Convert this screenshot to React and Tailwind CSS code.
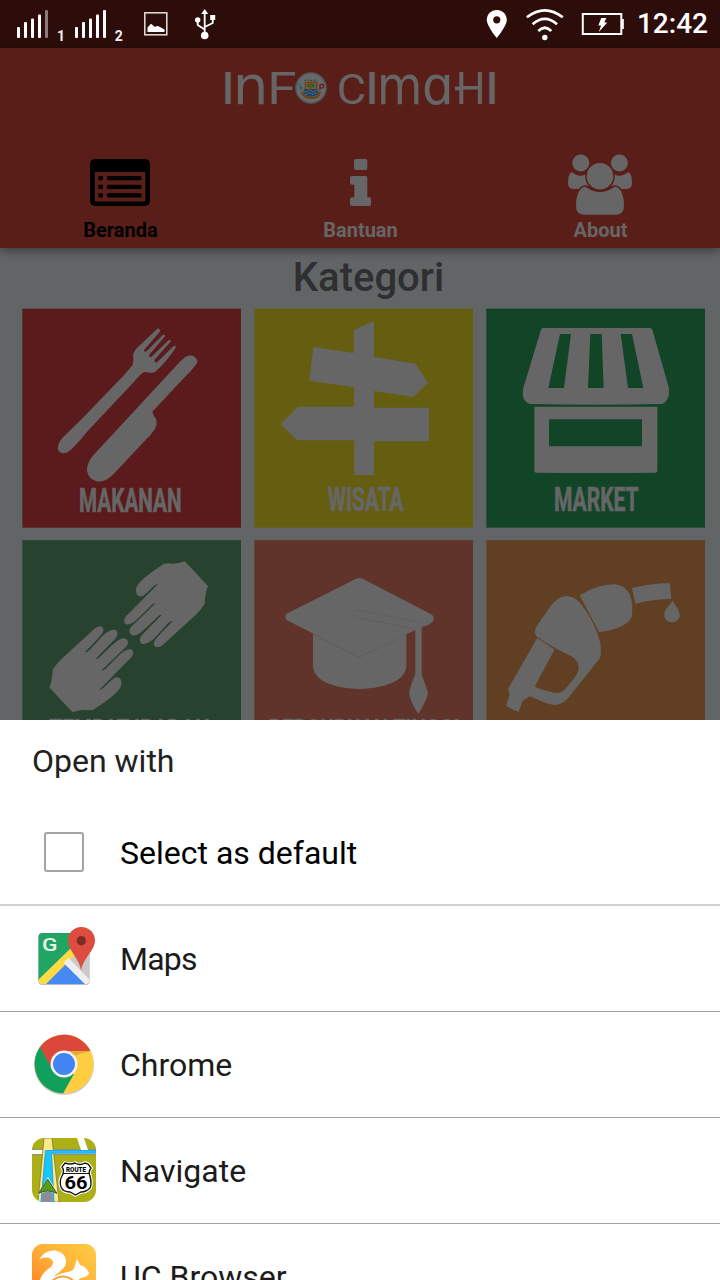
import React from "react";

const G = "#666666";

function SignalBars({ x, full }) {
  const tops = [27, 22, 18.5, 14.5, 10];
  return (
    <g fill="#fff">
      {tops.map((t, i) => (
        <rect key={t} x={x + i * 7} y={t} width="3" height={38 - t} rx="1" opacity={i === 4 && !full ? 0.45 : 1} />
      ))}
    </g>
  );
}

function StatusBar() {
  return (
    <div className="flex h-12 shrink-0 items-center justify-between bg-[#2d0d09] pr-3">
      <svg width="240" height="48" viewBox="0 0 240 48">
        <SignalBars x={17} />
        <SignalBars x={75} full />
        <text x="57" y="40.5" fontSize="14" fontWeight="700" fill="#eee" fontFamily="Roboto, sans-serif">1</text>
        <text x="114.8" y="40.5" fontSize="14" fontWeight="700" fill="#eee" fontFamily="Roboto, sans-serif">2</text>
        <rect x="144.8" y="12.8" width="22" height="22" fill="none" stroke="#dcd2d1" strokeWidth="1.6" />
        <path d="M147.500 32v-4.500l3.500-3.800 4 3.300q2-1.500 4-.500l5.500 3v2.500z" fill="#fff" />
        <g fill="none" stroke="#fff" strokeWidth="1.8">
          <path d="M204.7 35V13M204.7 29.500l-7-4.500v-4M204.700 27l8-4v-5" />
        </g>
        <g fill="#fff">
          <circle cx="204.700" cy="35.500" r="3.800" />
          <path d="M201.200 14l3.500-5 3.500 5z" />
          <circle cx="197.700" cy="20" r="2.700" />
          <rect x="210.200" y="15" width="5" height="5" />
        </g>
      </svg>
      <div className="flex items-center">
        <svg width="154" height="48" viewBox="483.2 0 154 48">
          <path fillRule="evenodd" fill="#fff" d="M497 10c-5.700 0-10 4.300-10 9.800 0 6.500 10 18.200 10 18.200s10-11.700 10-18.200c0-5.500-4.300-9.800-10-9.800zm0 6.200a3.600 3.600 0 1 1 0 7.200 3.600 3.600 0 0 1 0-7.200z" />
          <g fill="none" stroke="#fff" strokeWidth="2.600">
            <path d="M527 17.300Q545 3.500 563 17.300" />
            <path d="M532.800 24.300Q545 13.500 557.200 24.300" />
            <path d="M538.500 31Q545 24.500 551.500 31" />
          </g>
          <circle cx="545" cy="37.500" r="2.700" fill="#fff" />
          <rect x="583" y="14" width="38.500" height="20" fill="none" stroke="#fff" strokeWidth="2" />
          <rect x="621.500" y="19" width="2.500" height="10" fill="#fff" />
          <path d="M601.500 18h5l-2 4.500h3l-8.500 9.500 2.300-6.500H598.500z" fill="#fff" />
        </svg>
        <span className="text-[28px] leading-[50px] font-medium text-white">12:42</span>
      </div>
    </div>
  );
}

const sans = "Roboto, sans-serif";
const round = "'DejaVu Sans', sans-serif";

const wordmark = [
  { c: "I", x: 36, l: 36, s: 131, w: 500, f: sans },
  { c: "n", x: 68, l: 107, s: 160, w: 400, f: round },
  { c: "F", x: 172, l: 88, s: 131, w: 400, f: sans },
  { c: "C", x: 380, l: 88, s: 128, w: 400, f: sans },
  { c: "I", x: 468, l: 36, s: 131, w: 500, f: sans },
  { c: "m", x: 501, l: 136, s: 160, w: 400, f: round },
  { c: "ɑ", x: 636, l: 95, s: 160, w: 400, f: round },
  { c: "H", x: 738, l: 88, s: 131, w: 400, f: sans },
  { c: "I", x: 828, l: 36, s: 131, w: 500, f: sans },
];

function Wordmark() {
  return (
    <svg className="mx-auto mt-[7px] block overflow-visible" width="300" height="65" viewBox="0 0 900 195" aria-label="INFO CIMAHI">
      <g fill={G}>
        {wordmark.map((g, i) => (
          <text key={i} x={g.x} y="147" fontFamily={g.f} fontSize={g.s} fontWeight={g.w} textLength={g.l} lengthAdjust="spacingAndGlyphs">{g.c}</text>
        ))}
      </g>
      <rect x="735" y="95" width="16" height="11" fill={G} />
      <circle cx="303" cy="99" r="46" fill="#66696a" stroke="#4d4d4d" strokeWidth="4" />
      <path d="M286 82h34v22h-34z" stroke="#7a3a12" strokeWidth="4" fill="#665f45" />
      <path d="M292 88h7v9h-7zM306 88h7v9h-7z" fill="#176427" />
      <path d="M299 84h6v16h-6z" fill="#6b4b0c" />
      <path d="M281 103h44v15q-22 14-44 0z" fill="#17406c" />
      <path d="M282 108q6 6 11 0t11 0 11 0 10 0M284 116q5 5 10 0t10 0 10 0 9 0" fill="none" stroke="#666" strokeWidth="3" />
      <path d="M276 110q2 18 27 19t27-19" fill="none" stroke="#70400f" strokeWidth="6" />
      <path d="M330 104V89q11-3 11 4t-9 6" fill="none" stroke="#71142a" strokeWidth="4" />
      <path d="M265 88h5M268 95h5v10" fill="none" stroke="#15606c" strokeWidth="4" />
      <path d="M284 76h38" stroke="#333" strokeWidth="3" strokeDasharray="4 5" />
    </svg>
  );
}

function NavItem({ label, color, children, x }) {
  return (
    <div className="flex flex-1 flex-col items-center">
      <svg width="80" height="68" viewBox={`${x - 40} 150 80 68`}>{children}</svg>
      <span className={`pl-px text-xl leading-6 font-bold ${color}`}>{label}</span>
    </div>
  );
}

function Header() {
  return (
    <header className="z-10 h-[200px] shrink-0 bg-[#5a1e19] shadow-[0_2px_10px_rgba(0,0,0,0.45)]">
      <Wordmark />
      <nav className="mt-[30px] flex">
        <NavItem label="Beranda" color="text-black" x={120}>
          <path fillRule="evenodd" d="M95 159h50a5 5 0 0 1 5 5v37a5 5 0 0 1-5 5H95a5 5 0 0 1-5-5v-37a5 5 0 0 1 5-5zm-.300 13v28q0 1.500 1.500 1.500h47.700q1.500 0 1.500-1.500v-28z" />
          {[176, 184.700, 193.200].map((y) => (
            <g key={y}>
              <rect x="98.300" y={y} width="4.700" height="4.300" rx="1" />
              <rect x="107" y={y} width="34.500" height="4.300" rx="1" />
            </g>
          ))}
        </NavItem>
        <NavItem label="Bantuan" color="text-[#666]" x={360}>
          <g fill={G}>
            <rect x="354" y="159" width="13.300" height="11" rx="2" />
            <path d="M352 176h13.500q1.800 0 1.800 1.800v19.500h2q1.700 0 1.700 1.700v5.300q0 1.700-1.700 1.700H352q-2 0-2-1.700V199q0-1.700 2-1.700h2.300v-12.500H352q-2 0-2-1.700v-5.300q0-1.800 2-1.800z" />
          </g>
        </NavItem>
        <NavItem label="About" color="text-[#666]" x={600}>
          <g fill={G} stroke="#5a1e19" strokeWidth="1.600">
            <g stroke="none">
              <path d="M571.500 172q8.500 6.500 15.500 1.500-1 8 3 11l-4 4.500h-12q-6 0-6-5.500 0-9.500 3.500-11.500z" />
              <path d="M628.500 172q-8.500 6.500-15.500 1.500 1 8-3 11l4 4.500h12q6 0 6-5.500 0-9.500-3.500-11.500z" />
            </g>
            <circle cx="580.800" cy="163" r="9.300" />
            <circle cx="619.400" cy="163" r="9.300" />
            <path d="M586 186q14 10.500 28 0c8-.5 10.800 10 10.800 20 0 6-3.500 9.500-9.500 9.500h-30.600c-6 0-9.500-3.500-9.500-9.500 0-10 3-20.500 10.800-20z" />
            <circle cx="600" cy="176.200" r="14" />
          </g>
        </NavItem>
      </nav>
    </header>
  );
}

function Tile({ x, y, color, caption, cx, cw, base = 636, children }) {
  return (
    <svg width="220" height="220" viewBox={`${x} ${y} 660 660`}>
      <rect x={x + 1} y={y === 24 ? 26 : 30.500} width="656" height="657" fill={color} />
      <g fill={G}>{children}</g>
      {caption && (
        <text x={cx} y={base} fontFamily="Roboto, sans-serif" fontSize="102" fontWeight="700" fill={G} stroke={G} strokeWidth="2" textLength={cw} lengthAdjust="spacingAndGlyphs">
          {caption}
        </text>
      )}
    </svg>
  );
}

function Categories() {
  return (
    <div className="grid grid-cols-[220px_220px_220px] gap-3 pl-[22px]">
      <Tile x={21} y={24} color="#5b1a1c" caption="MAKANAN" cx={192} cw={308}>
        <path d="M426 87q6-4 9 3l-1 6-47 54q0 6 6 5l51-51q7-1 6 5l-48 56q-1 7 7 6l53-52q7 0 4 7l-48 54q-1 9 8 7l50-49q8-2 6 5-28 43-62 73-10 4-33 0-10 5-30 29L212 400q-31 40-50 54-10 8-22 5-14-5-11-20 3-17 22-34l55-54 122-127 25-29q3-8 1-29 3-15 15-25z" />
        <path d="M496 184q30-31 47-9 9 8-1 20-16 22-39 43l-91 97q3 12 11 21 5 16-3 30-12 20-34 40l-90 96q-22 22-43 23-30-2-37-31-2-20 16-45z" />
      </Tile>
      <Tile x={27} y={24} color="#655e10" caption="WISATA" cx={248} cw={228} base={633}>
        <path d="M326 90l61-26v107l125 20 36 57-43 43-118-18v50h165v101H387v101h-59V421H157l-50-48 52-53h168v-58l-134-20 12-101 121 18z" />
      </Tile>
      <Tile x={18} y={24} color="#124528" caption="MARKET" cx={222} cw={254} base={633}>
        <path fillRule="evenodd" d="M187 84h323q6 0 9 12l47 165q4 25-4 36-8 15-20 15-195 5-390 0-14-1-21-17-5-12-1-31l50-165q2-12 7-15zm53 18l-35 162h47l21-162zm91 0l-7 162h47l-6-162zm91 0l22 162h46L456 102z" />
        <path fillRule="evenodd" d="M163 320h369v192q0 6-6 6-178 2-357 0-6 0-6-6zm44 38v81h279v-81z" />
      </Tile>
      <Tile x={21} y={30} color="#27422f" caption="TEMPAT IBADAH" cx={102} cw={482} base={639}>
        <path id="hand" d="M509 94q35 36 70 75-9 20-10 53-10 15-24 30l-91 83q-15 17-29 17-14-5-5-21 7-11 53-57-6-2-14 6l-43 47q-23 18-36 14-12-8 1-26l59-60q-6-2-12 5-28 28-52 48-16 12-26 7-12-7-3-23l75-72q-6-1-12 5-27 27-50 49-18 12-27 9-12-8 0-24l96-97q-8 0-18 11-20 20-28 25-12 4-18-5-8-20 11-38 20-20 60-46 10-10 25-9 22 4 48-6z" />
        <use href="#hand" transform="rotate(180 341 320.500)" />
      </Tile>
      <Tile x={27} y={30} color="#60342a" caption="PERGURUAN TINGGI" cx={72} cw={572} base={639}>
        <path d="M204 310l139 71 141-71v95q0 35-45 55-45 17-96 17t-96-17q-43-20-43-55z" />
        <path d="M326 150q17-12 34 0l199 103q12 8 5 20-10 14-34 17v145q14 35 19 55-3 20-29 62-26-40-28-64 7-30 19-55V300L343 381 126 271q-8-8-3-19z" />
        <path d="M204 313l139 69 141-69M529 278L340 240q-17 2-15 13 4 11 17 11l168 33" fill="none" stroke="#625b58" strokeWidth="2.500" />
      </Tile>
      <Tile x={18} y={30} color="#613f22">
        <path fillRule="evenodd" d="M169 290l45-65q22-26 45-27 24 0 42 22 45 55 60 120 4 30-1 44l-96 121q-18 20-40 20-25-2-74-26l-22 14-12 32q-25-7-37-18l10-35-5-15 88-154 52 35-60 112q44 18 69 19 15-2 26-16 27-30 35-48 9-28-20-46-46-22-92-48-25-15-13-41z" />
        <path d="M299 196q54-33 105-33 30 2 45 30 12 32 6 67-8 18-29 28-30 15-69 18zM456 174q55-14 113-15l5 47q-57 2-108 15zM578 212l16 26q9 20 3 27-7 12-21 12-17-1-22-14-4-13 4-26z" />
        <path d="M170 321l54 36" stroke="#613f22" strokeWidth="3" />
      </Tile>
    </div>
  );
}

function MapsIcon() {
  return (
    <svg className="-mt-px" width="64" height="64" viewBox="0 0 64 64">
      <defs><clipPath id="mapclip"><rect x="6.500" y="7" width="51" height="51" rx="4" /></clipPath></defs>
      <rect x="6.500" y="8" width="51" height="51" rx="4" fill="#bbb" />
      <g clipPath="url(#mapclip)">
        <path d="M6 6h52v52H6z" fill="#c9c9c9" />
        <path d="M6 6h42v14L6 58z" fill="#21a464" />
        <path d="M31.300 36.500L9 59h45z" fill="#4688f4" />
        <path d="M5 55l34-33 4 7L12 60H5z" fill="#ffdb43" />
        <path d="M36.500 32l-5 4.700L54 59l5-4z" fill="#eee" />
      </g>
      <path d="M49.300 1C42 1 36 6.700 36 14.200c0 10.500 11.500 18 13.200 30.500 1.500-12.500 13.800-20 13.800-30.500C63 6.700 56.800 1 49.300 1z" fill="#de4c3f" />
      <circle cx="49.300" cy="14.700" r="4.700" fill="#7e2c25" />
      <text x="10" y="24.500" fontFamily="Roboto, sans-serif" fontSize="19" fontWeight="500" fill="#e8f5ed" textLength="15.500" lengthAdjust="spacingAndGlyphs">G</text>
    </svg>
  );
}

function ChromeIcon() {
  return (
    <svg className="-mt-px" width="64" height="64" viewBox="0 0 64 64">
      <circle cx="32" cy="33" r="30" fill="#ccc" />
      <circle cx="32" cy="32" r="29.600" fill="#ffcd40" />
      <path d="M8 15a29.600 29.600 0 0 0 23 46.600L42 42 28 40z" fill="#11a05c" />
      <path d="M8 15a29.600 29.600 0 0 1 50.500 4H32L20 37z" fill="#db4739" />
      <path d="M32 19h26l-17 5z" fill="#e5ab32" />
      <circle cx="32" cy="32" r="13.500" fill="#f4f4f4" />
      <circle cx="32" cy="32" r="11" fill="#4384f3" />
    </svg>
  );
}

function NavigateIcon() {
  const shield = "M33 25q5 2 10 0 5 3 10 0l3 1 3 4q-3 4-1 8 2 8 0 12-4 4-9 4l-5.500 3-5.500-3q-7 0-9-5-2-6 1-11 3-5 0-9z";
  return (
    <svg className="-mt-px" width="64" height="64" viewBox="0 0 64 64">
      <defs><clipPath id="navclip"><rect width="64" height="64" rx="12" /></clipPath></defs>
      <g clipPath="url(#navclip)">
        <path d="M0 0h64v64H0z" fill="#adb014" />
        <path d="M0 10.500h64v7H0z" fill="#999a5a" />
        <path d="M0 12h64v4H0zM45 0h7l4 12h-7z" fill="#fff" />
        <path d="M12 0h8l7 64H6z" fill="#fbe98a" stroke="#83753a" strokeWidth=".8" />
        <path d="M13.500 12.500H64v2.800H19.500L22 64H9z" fill="#17c7f8" stroke="#1c8fe0" strokeWidth=".8" />
        <path d="M11 54h9l1 10H10z" fill="#8d8d96" />
        <path d="M16 39L5.500 57q10.500-7 21 0z" fill="#fff" />
        <path d="M15.700 41L6.500 55.500q9-5 18.500 0z" fill="#559e17" stroke="#34352b" strokeWidth=".8" />
      </g>
      <path d={shield} fill="#fff" stroke="#fff" strokeWidth="3.500" />
      <path d={shield} fill="#fff" stroke="#161616" strokeWidth="1.400" />
      <path d="M31 35.500h27" stroke="#161616" />
      <text x="34" y="33.700" fontFamily="Roboto, sans-serif" fontSize="7.500" fontWeight="900" textLength="20" lengthAdjust="spacingAndGlyphs">ROUTE</text>
      <text x="32.500" y="50.500" fontFamily="Roboto, sans-serif" fontSize="18" fontWeight="700" textLength="23" lengthAdjust="spacingAndGlyphs">66</text>
    </svg>
  );
}

function UcIcon() {
  return (
    <svg className="-mt-px" width="64" height="64" viewBox="0 0 64 64">
      <defs>
        <linearGradient id="uc" x1="1" y1="0" x2="0" y2="1">
          <stop offset="0" stopColor="#ffcc45" />
          <stop offset=".5" stopColor="#ffae35" />
          <stop offset="1" stopColor="#ff6f20" />
        </linearGradient>
      </defs>
      <rect width="64" height="64" rx="11" fill="url(#uc)" />
      <path d="M7 16C11 8 19 5.500 25 7c8 2 11 9 8 15-3 5-8 7-11 11 7-5 14-4 19-7 2-3 2-6 3-8l1-3 3 6c5 1 7 4 9 8-1 4-5 4-8 5-5 2-3 9-9 15-10 10-28 8-32-5-2-8 2-14 7-18 6-4 8-8 4-11-3-2-8-2-12 1z" fill="#fff" />
      <path d="M21 36q10-7 20 0" fill="none" stroke="#ff9a35" strokeWidth="2" />
    </svg>
  );
}

function Row({ icon, label, tight }) {
  return (
    <div className="box-content flex h-[105px] shrink-0 items-center gap-6 border-b border-[#a0a0a0] pl-8">
      {icon}
      <span className={`text-[32px] leading-[40px] text-[#1b1b1b] ${tight ? "tracking-[-0.8px]" : ""}`}>{label}</span>
    </div>
  );
}

export default function App() {
  return (
    <div className="flex h-[1280px] w-[720px] flex-col overflow-hidden bg-white font-[Roboto,sans-serif]">
      <div className="flex h-[720px] shrink-0 flex-col overflow-hidden bg-[#616566]">
        <StatusBar />
        <Header />
        <main>
          <h1 className="h-[60px] pl-[17px] text-center text-[40px] leading-[60px] font-medium text-[#2d2f30]">Kategori</h1>
          <Categories />
        </main>
      </div>
      <section className="flex h-[560px] shrink-0 flex-col overflow-hidden bg-white">
        <h2 className="h-20 shrink-0 pl-8 text-[32px] leading-[82px] text-[#212121]">Open with</h2>
        <label className="flex h-[106px] shrink-0 items-center border-b-2 border-[#d0d0d0] pl-11">
          <span className="size-10 rounded-[3px] border-2 border-[#a3a3a3]" />
          <span className="pt-0.5 pl-9 text-[32px] leading-[40px] text-black">Select as default</span>
        </label>
        <Row icon={<MapsIcon />} label="Maps" tight />
        <Row icon={<ChromeIcon />} label="Chrome" />
        <Row icon={<NavigateIcon />} label="Navigate" />
        <Row icon={<UcIcon />} label="UC Browser" />
      </section>
    </div>
  );
}
